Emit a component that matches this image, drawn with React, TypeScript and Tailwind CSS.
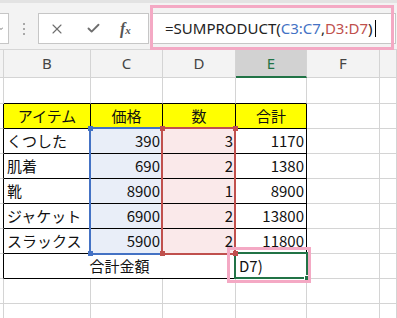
import { X, Check } from 'lucide-react';

type Item = { name: string; price: number; qty: number; total: number };

const items: Item[] = [
  { name: 'くつした', price: 390, qty: 3, total: 1170 },
  { name: '肌着', price: 690, qty: 2, total: 1380 },
  { name: '靴', price: 8900, qty: 1, total: 8900 },
  { name: 'ジャケット', price: 6900, qty: 2, total: 13800 },
  { name: 'スラックス', price: 5900, qty: 2, total: 11800 },
];

const jp = "font-['Noto_Sans_CJK_JP','Noto_Sans',sans-serif]";
const grid = 'border-r border-b border-[#d4d4d4]';
const blk = 'border-r border-b border-black';

function Toolbar() {
  return (
    <div className="relative h-[50px] bg-[#f3f3f3] border-b border-[#d6d6d6]">
      <div className="h-[3px] bg-[#e3e3e3]" />
      <div className="flex items-start pt-[10px]">
        {/* name box, mostly scrolled off */}
        <div className="w-[9px] h-[31px] bg-white border-y border-r border-[#c6c6c6] flex items-center">
          <svg width="4" height="6" viewBox="0 0 4 6" className="-ml-[1px]">
            <path d="M0 1.5 L2 3.5 L4 1.5" stroke="#777" strokeWidth="1" fill="none" />
          </svg>
        </div>
        {/* grip dots */}
        <div className="ml-[14px] h-[31px] flex flex-col justify-center gap-[3px]">
          <div className="w-[2px] h-[2px] bg-[#a8a8a8]" />
          <div className="w-[2px] h-[2px] bg-[#a8a8a8]" />
          <div className="w-[2px] h-[2px] bg-[#a8a8a8]" />
        </div>
        {/* cancel / enter / fx */}
        <div className="ml-[13px] w-[111px] h-[31px] bg-white border border-[#c6c6c6] flex items-center">
          <X size={16} strokeWidth={1.7} className="ml-[10px] text-[#6e6e6e]" />
          <Check size={15} strokeWidth={3} className="ml-[21px] text-[#6e6e6e]" />
          <span className="ml-[19px] text-[#555] font-['Liberation_Serif',serif] italic font-bold text-[16px] leading-none">
            f<span className="text-[11px]">x</span>
          </span>
        </div>
        {/* formula input */}
        <div className="ml-[2px] flex-1 mr-[1px] h-[31px] bg-white border border-[#c6c6c6] flex items-center pl-[13px]">
          <span className="font-['Noto_Sans',sans-serif] text-[15px] text-[#222] leading-none whitespace-nowrap">
            =SUMPRODUCT(<span className="text-[#4472c4]">C3:C7</span>,<span className="text-[#c0504d]">D3:D7</span>)
          </span>
          <div className="ml-[2px] w-[1px] h-[17px] bg-black" />
        </div>
      </div>
      {/* annotation */}
      <div className="absolute left-[150px] top-[5px] w-[244px] h-[45px] border-[3px] border-[#f4a9c4]" />
    </div>
  );
}

function ColHeaders() {
  const letters = ['', 'B', 'C', 'D', 'E', 'F', ''];
  const widths = ['w-[4px]', 'w-[87px]', 'w-[72px]', 'w-[73px]', 'w-[71px]', 'w-[73px]', 'flex-1'];
  return (
    <div className="flex h-[28px] bg-[#f3f3f3] font-['Noto_Sans',sans-serif] text-[15px]">
      {letters.map((l, i) =>
        l === 'E' ? (
          <div key={i} className={`${widths[i]} border-r border-[#d4d4d4] bg-[#d2d2d2] border-b-2 border-b-[#217346] flex items-center justify-center text-[#217346]`}>
            {l}
          </div>
        ) : (
          <div key={i} className={`${widths[i]} border-r border-b border-[#d4d4d4] flex items-center justify-center text-[#444]`}>
            {l}
          </div>
        )
      )}
    </div>
  );
}

function Sheet() {
  return (
    <div className={`relative bg-white text-[15px] text-[#111] ${jp}`}>
      {/* row 1 */}
      <div className="flex h-[26px]">
        <div className={`w-[4px] ${grid}`} />
        <div className="w-[87px] border-r border-[#d4d4d4] border-b border-b-black" />
        <div className="w-[72px] border-r border-[#d4d4d4] border-b border-b-black" />
        <div className="w-[73px] border-r border-[#d4d4d4] border-b border-b-black" />
        <div className="w-[71px] border-r border-[#d4d4d4] border-b border-b-black" />
        <div className={`w-[73px] ${grid}`} />
        <div className={`flex-1 ${grid}`} />
      </div>
      {/* header row */}
      <div className="flex h-[25px]">
        <div className="w-[4px] border-r border-r-black border-b border-[#d4d4d4]" />
        <div className={`w-[87px] ${blk} bg-[#ffff00] flex items-center justify-center`}>アイテム</div>
        <div className={`w-[72px] ${blk} bg-[#ffff00] flex items-center justify-center`}>価格</div>
        <div className={`w-[73px] ${blk} bg-[#ffff00] flex items-center justify-center`}>数</div>
        <div className={`w-[71px] ${blk} bg-[#ffff00] flex items-center justify-center`}>合計</div>
        <div className={`w-[73px] ${grid}`} />
        <div className={`flex-1 ${grid}`} />
      </div>
      {items.map((it) => (
        <div key={it.name} className="flex h-[25px]">
          <div className="w-[4px] border-r border-r-black border-b border-[#d4d4d4]" />
          <div className={`w-[87px] ${blk} flex items-center pl-[3px]`}>{it.name}</div>
          <div className={`w-[72px] ${blk} bg-[#e9eef8] flex items-center justify-end pr-[2px]`}>{it.price}</div>
          <div className={`w-[73px] ${blk} bg-[#fae9ea] flex items-center justify-end pr-[2px]`}>{it.qty}</div>
          <div className={`w-[71px] ${blk} flex items-center justify-end pr-[2px]`}>{it.total}</div>
          <div className={`w-[73px] ${grid}`} />
          <div className={`flex-1 ${grid}`} />
        </div>
      ))}
      {/* total row, B:D merged */}
      <div className="flex h-[25px]">
        <div className="w-[4px] border-r border-r-black border-b border-[#d4d4d4]" />
        <div className={`w-[232px] ${blk} flex items-center justify-center`}>合計金額</div>
        <div className={`w-[71px] ${blk} flex items-center pl-[3px]`}>D7)</div>
        <div className={`w-[73px] ${grid}`} />
        <div className={`flex-1 ${grid}`} />
      </div>
      {[0, 1].map((r) => (
        <div key={r} className="flex h-[25px]">
          <div className={`w-[4px] ${grid}`} />
          <div className={`w-[87px] ${grid}`} />
          <div className={`w-[72px] ${grid}`} />
          <div className={`w-[73px] ${grid}`} />
          <div className={`w-[71px] ${grid}`} />
          <div className={`w-[73px] ${grid}`} />
          <div className={`flex-1 ${grid}`} />
        </div>
      ))}

      {/* range highlights */}
      <div className="absolute left-[89px] top-[49px] w-[74px] h-[128px] border-2 border-[#4472c4]" />
      <div className="absolute left-[161px] top-[49px] w-[75px] h-[128px] border-2 border-[#c0504d]" />
      <div className="absolute left-[88px] top-[48px] w-[5px] h-[5px] bg-[#4472c4]" />
      <div className="absolute left-[88px] top-[173px] w-[5px] h-[5px] bg-[#4472c4]" />
      <div className="absolute left-[160px] top-[48px] w-[5px] h-[5px] bg-[#c0504d]" />
      <div className="absolute left-[233px] top-[48px] w-[5px] h-[5px] bg-[#c0504d]" />
      <div className="absolute left-[160px] top-[173px] w-[5px] h-[5px] bg-[#c0504d]" />

      {/* active cell E8 */}
      <div className="absolute left-[234px] top-[174px] w-[74px] h-[27px] border-2 border-[#217346]" />
      <div className="absolute left-[233px] top-[173px] w-[5px] h-[5px] bg-[#c0504d]" />
      <div className="absolute left-[304px] top-[197px] w-[6px] h-[6px] bg-[#217346] border border-white" />
      {/* annotation */}
      <div className="absolute left-[227px] top-[169px] w-[84px] h-[36px] border-[3px] border-[#f4a9c4]" />
    </div>
  );
}

export default function App() {
  return (
    <div className="w-[397px] h-[318px] overflow-hidden bg-white">
      <Toolbar />
      <ColHeaders />
      <Sheet />
    </div>
  );
}
